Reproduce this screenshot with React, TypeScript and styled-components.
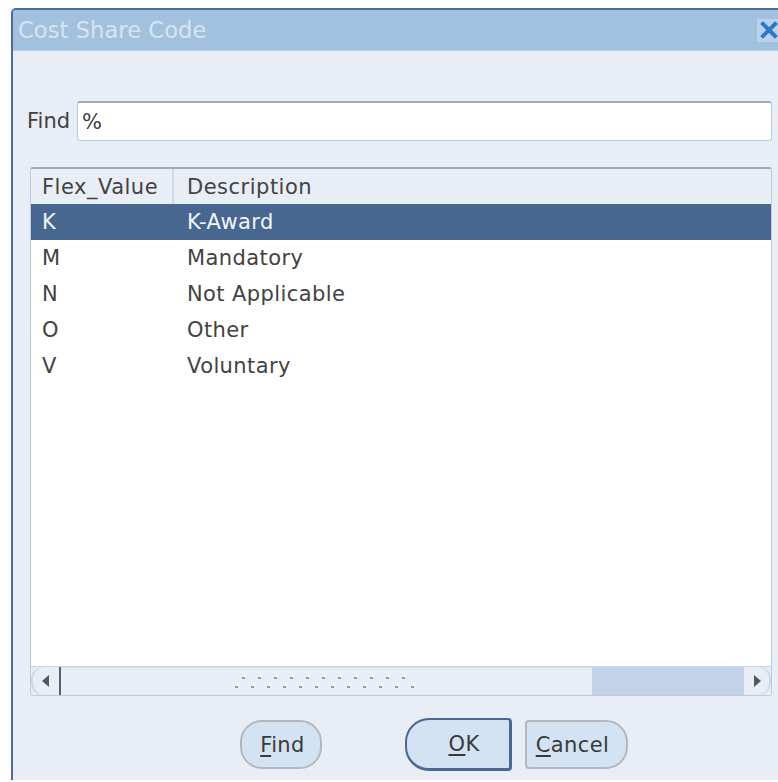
import React from "react";
import styled, { createGlobalStyle } from "styled-components";

const Global = createGlobalStyle`
  html, body {
    margin: 0;
    padding: 0;
    background: #ffffff;
    overflow: hidden;
  }
  body {
    font-family: "DejaVu Sans", "Liberation Sans", sans-serif;
  }
`;

const Window = styled.div`
  margin: 8px 0 0 11px;
  width: 773px;
  height: 772px;
  box-sizing: border-box;
  border: 2px solid #4d6c98;
  border-bottom: none;
  border-radius: 5px 5px 0 0;
  background: #e9eef6;
  display: flex;
  flex-direction: column;
  overflow: hidden;
`;

const TitleBar = styled.div`
  height: 40px;
  flex: none;
  background: #a2c1df;
  display: flex;
  align-items: center;
  justify-content: space-between;
  padding-left: 5px;
  border-bottom: 1px solid #bcd2e8;
`;

const Title = styled.span`
  font-size: 22.5px;
  color: #d6e4f1;
  letter-spacing: 0.1px;
`;

const CloseBox = styled.div`
  width: 24px;
  height: 23px;
  margin-right: 1px;
  background: #b8d3ed;
  display: flex;
  align-items: center;
  justify-content: center;
`;

const Body = styled.div`
  flex: 1;
  display: flex;
  flex-direction: column;
  padding: 50px 10px 0 14px;
`;

const FindRow = styled.div`
  display: flex;
  align-items: center;
  gap: 2px;
`;

const Label = styled.label`
  font-size: 21px;
  color: #404040;
  width: 48px;
`;

const TextInput = styled.div`
  flex: 1;
  height: 40px;
  box-sizing: border-box;
  background: #ffffff;
  border: 1px solid #bccbde;
  border-top: 2px solid #a6a9ae;
  border-radius: 3px;
  display: flex;
  align-items: center;
  padding-left: 4px;
  font-size: 21px;
  color: #404040;
`;

const ListBox = styled.div`
  margin: 26px 0 0 3px;
  height: 529px;
  box-sizing: border-box;
  border: 1px solid #bccbde;
  border-top: 2px solid #a6a9ae;
  border-radius: 3px;
  background: #ffffff;
  display: flex;
  flex-direction: column;
  overflow: hidden;
`;

const HeaderRow = styled.div`
  display: grid;
  grid-template-columns: 143px 1fr;
  height: 35px;
  flex: none;
  background: #e9eef6;
`;

const HeaderCell = styled.div<{ $first?: boolean }>`
  display: flex;
  align-items: center;
  padding-left: ${(p) => (p.$first ? "11px" : "13px")};
  font-size: 21px;
  letter-spacing: 0.5px;
  color: #424242;
  border-right: ${(p) => (p.$first ? "2px solid #cfdbe9" : "none")};
`;

const Rows = styled.div`
  flex: 1;
  background: #ffffff;
  border-bottom: 1px solid #c6d5e7;
`;

const Row = styled.div<{ $selected?: boolean }>`
  display: grid;
  grid-template-columns: 145px 1fr;
  height: 36px;
  align-items: center;
  background: ${(p) => (p.$selected ? "#476791" : "transparent")};
  color: ${(p) => (p.$selected ? "#f2f5fa" : "#424242")};
  font-size: 21px;
  letter-spacing: 0.4px;
`;

const Cell = styled.div`
  padding-left: 11px;
`;

const ScrollBar = styled.div`
  height: 28px;
  flex: none;
  display: flex;
  background: #e9eef6;
`;

const ArrowButton = styled.div<{ $side: "left" | "right" }>`
  width: ${(p) => (p.$side === "left" ? "28px" : "27px")};
  display: flex;
  align-items: center;
  justify-content: center;
  background: #e9eef6;
  border-radius: ${(p) => (p.$side === "left" ? "12px 0 0 12px" : "0 12px 12px 0")};
  border-right: ${(p) => (p.$side === "left" ? "2px solid #5a5e66" : "none")};
  box-shadow: ${(p) =>
    p.$side === "left" ? "inset 2px 0 0 #cdd9e8" : "inset -2px 0 0 #cdd9e8"};
`;

const Thumb = styled.div`
  width: 531px;
  display: flex;
  align-items: center;
  justify-content: center;
  background: #e9eef6;
  border-top: 1px solid #d4dfec;
  box-sizing: border-box;
`;

const Track = styled.div`
  flex: 1;
  background: #c2d3e8;
`;

const ButtonRow = styled.div`
  display: flex;
  align-items: center;
  margin-top: 22px;
  padding-left: 213px;
`;

const Btn = styled.button<{ $shape: "pill" | "left" | "right"; $default?: boolean }>`
  font-family: "DejaVu Sans", "Liberation Sans", sans-serif;
  font-size: 21px;
  letter-spacing: 0.4px;
  color: #3a3a3a;
  background: #d3e3f3;
  height: ${(p) => (p.$default ? "53px" : "49px")};
  box-sizing: border-box;
  padding: 0;
  cursor: pointer;
  border: ${(p) => (p.$default ? "2px solid #4b6990" : "2px solid #b3b8be")};
  border-right-width: ${(p) => (p.$default ? "3px" : "2px")};
  border-bottom-width: ${(p) => (p.$default ? "3px" : "2px")};
  border-radius: ${(p) =>
    p.$shape === "pill" ? "22px" : p.$shape === "left" ? "24px 4px 4px 24px" : "4px 22px 22px 4px"};
  u {
    text-decoration: underline;
    text-underline-offset: 3px;
  }
`;

const FindBtn = styled(Btn)`
  width: 82px;
  padding-left: 3px;
`;

const OkBtn = styled(Btn)`
  width: 107px;
  margin-left: 83px;
  padding-left: 12px;
`;

const CancelBtn = styled(Btn)`
  width: 103px;
  margin-left: 13px;
  padding-right: 8px;
`;

const rows = [
  { code: "K", desc: "K-Award", selected: true },
  { code: "M", desc: "Mandatory" },
  { code: "N", desc: "Not Applicable" },
  { code: "O", desc: "Other" },
  { code: "V", desc: "Voluntary" },
];

function CloseIcon() {
  return (
    <svg width="18" height="18" viewBox="0 0 18 18">
      <path d="M3 3 L15 15 M15 3 L3 15" stroke="#2f79c9" strokeWidth="4" strokeLinecap="square" />
    </svg>
  );
}

function Arrow({ dir }: { dir: "left" | "right" }) {
  return (
    <svg width="9" height="14" viewBox="0 0 9 14">
      {dir === "left" ? (
        <path d="M8 1 L1 7 L8 13 Z" fill="#55585e" />
      ) : (
        <path d="M1 1 L8 7 L1 13 Z" fill="#55585e" />
      )}
    </svg>
  );
}

// raised grip dots on the scroll thumb
function Grip() {
  const top = Array.from({ length: 11 }, (_, i) => 10 + i * 16);
  const bottom = Array.from({ length: 12 }, (_, i) => 3 + i * 16);
  const dot = (x: number, y: number, key: string) => (
    <g key={key}>
      <rect x={x} y={y} width={2} height={2} fill="#ffffff" />
      <rect x={x - 2} y={y + 2} width={3} height={2} fill="#8e9bad" />
    </g>
  );
  return (
    <svg width="186" height="18" viewBox="0 0 186 18">
      {top.map((x) => dot(x, 2, `t${x}`))}
      {bottom.map((x) => dot(x, 11, `b${x}`))}
    </svg>
  );
}

export default function App() {
  return (
    <>
      <Global />
      <Window>
        <TitleBar>
          <Title>Cost Share Code</Title>
          <CloseBox>
            <CloseIcon />
          </CloseBox>
        </TitleBar>
        <Body>
          <FindRow>
            <Label>Find</Label>
            <TextInput>%</TextInput>
          </FindRow>
          <ListBox>
            <HeaderRow>
              <HeaderCell $first>Flex_Value</HeaderCell>
              <HeaderCell>Description</HeaderCell>
            </HeaderRow>
            <Rows>
              {rows.map((r) => (
                <Row key={r.code} $selected={r.selected}>
                  <Cell>{r.code}</Cell>
                  <Cell>{r.desc}</Cell>
                </Row>
              ))}
            </Rows>
            <ScrollBar>
              <ArrowButton $side="left">
                <Arrow dir="left" />
              </ArrowButton>
              <Thumb>
                <Grip />
              </Thumb>
              <Track />
              <ArrowButton $side="right">
                <Arrow dir="right" />
              </ArrowButton>
            </ScrollBar>
          </ListBox>
          <ButtonRow>
            <FindBtn $shape="pill">
              <u>F</u>ind
            </FindBtn>
            <OkBtn $shape="left" $default>
              <u>O</u>K
            </OkBtn>
            <CancelBtn $shape="right">
              <u>C</u>ancel
            </CancelBtn>
          </ButtonRow>
        </Body>
      </Window>
    </>
  );
}
